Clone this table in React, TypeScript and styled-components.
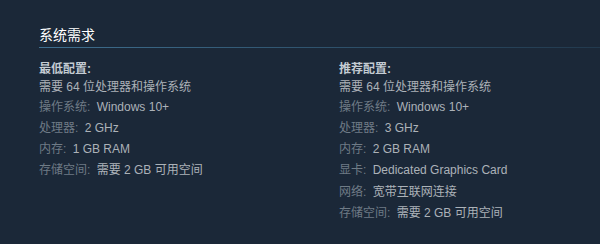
import * as React from "react";
import styled, { createGlobalStyle } from "styled-components";

const GlobalStyle = createGlobalStyle`
  html, body {
    margin: 0;
    padding: 0;
    background: #1b2838;
    overflow: hidden;
  }
  body {
    font-family: "Liberation Sans", Arial, "Noto Sans CJK SC", sans-serif;
  }
`;

const Page = styled.div`
  width: 600px;
  height: 244px;
  background: #1b2838;
  padding: 26px 0 0 39px;
  box-sizing: border-box;
  overflow: hidden;
`;

const Header = styled.h2`
  margin: 0;
  padding-bottom: 3px;
  font-size: 14px;
  line-height: 18px;
  font-weight: normal;
  color: #ffffff;
  border-bottom: 1px solid transparent;
  border-image: linear-gradient(to right, #3f6f8f 0%, #2c4d66 60%, #22394d 100%) 1;
`;

const Columns = styled.div`
  display: grid;
  grid-template-columns: 300px 300px;
  padding-top: 12px;
`;

const Column = styled.div`
  font-size: 12px;
  line-height: 18px;
  color: #acb2b8;
`;

const Heading = styled.div`
  font-weight: bold;
  color: #c4ccd3;
`;

const Note = styled.div`
  margin-bottom: 1.5px;
`;

const List = styled.ul`
  list-style: none;
  margin: 0;
  padding: 0;
`;

const Item = styled.li`
  margin-bottom: 3.33px;
`;

const Label = styled.span`
  color: #6f7b86;
  margin-right: 3px;
`;

type Spec = { label: string; value: string };

const minimum: Spec[] = [
  { label: "操作系统:", value: "Windows 10+" },
  { label: "处理器:", value: "2 GHz" },
  { label: "内存:", value: "1 GB RAM" },
  { label: "存储空间:", value: "需要 2 GB 可用空间" }
];

const recommended: Spec[] = [
  { label: "操作系统:", value: "Windows 10+" },
  { label: "处理器:", value: "3 GHz" },
  { label: "内存:", value: "2 GB RAM" },
  { label: "显卡:", value: "Dedicated Graphics Card" },
  { label: "网络:", value: "宽带互联网连接" },
  { label: "存储空间:", value: "需要 2 GB 可用空间" }
];

function ReqColumn({ title, specs }: { title: string; specs: Spec[] }) {
  return (
    <Column>
      <Heading>{title}</Heading>
      <Note>需要 64 位处理器和操作系统</Note>
      <List>
        {specs.map((s) => (
          <Item key={s.label}>
            <Label>{s.label}</Label> {s.value}
          </Item>
        ))}
      </List>
    </Column>
  );
}

export default function App() {
  return (
    <>
      <GlobalStyle />
      <Page>
        <Header>系统需求</Header>
        <Columns>
          <ReqColumn title="最低配置:" specs={minimum} />
          <ReqColumn title="推荐配置:" specs={recommended} />
        </Columns>
      </Page>
    </>
  );
}
